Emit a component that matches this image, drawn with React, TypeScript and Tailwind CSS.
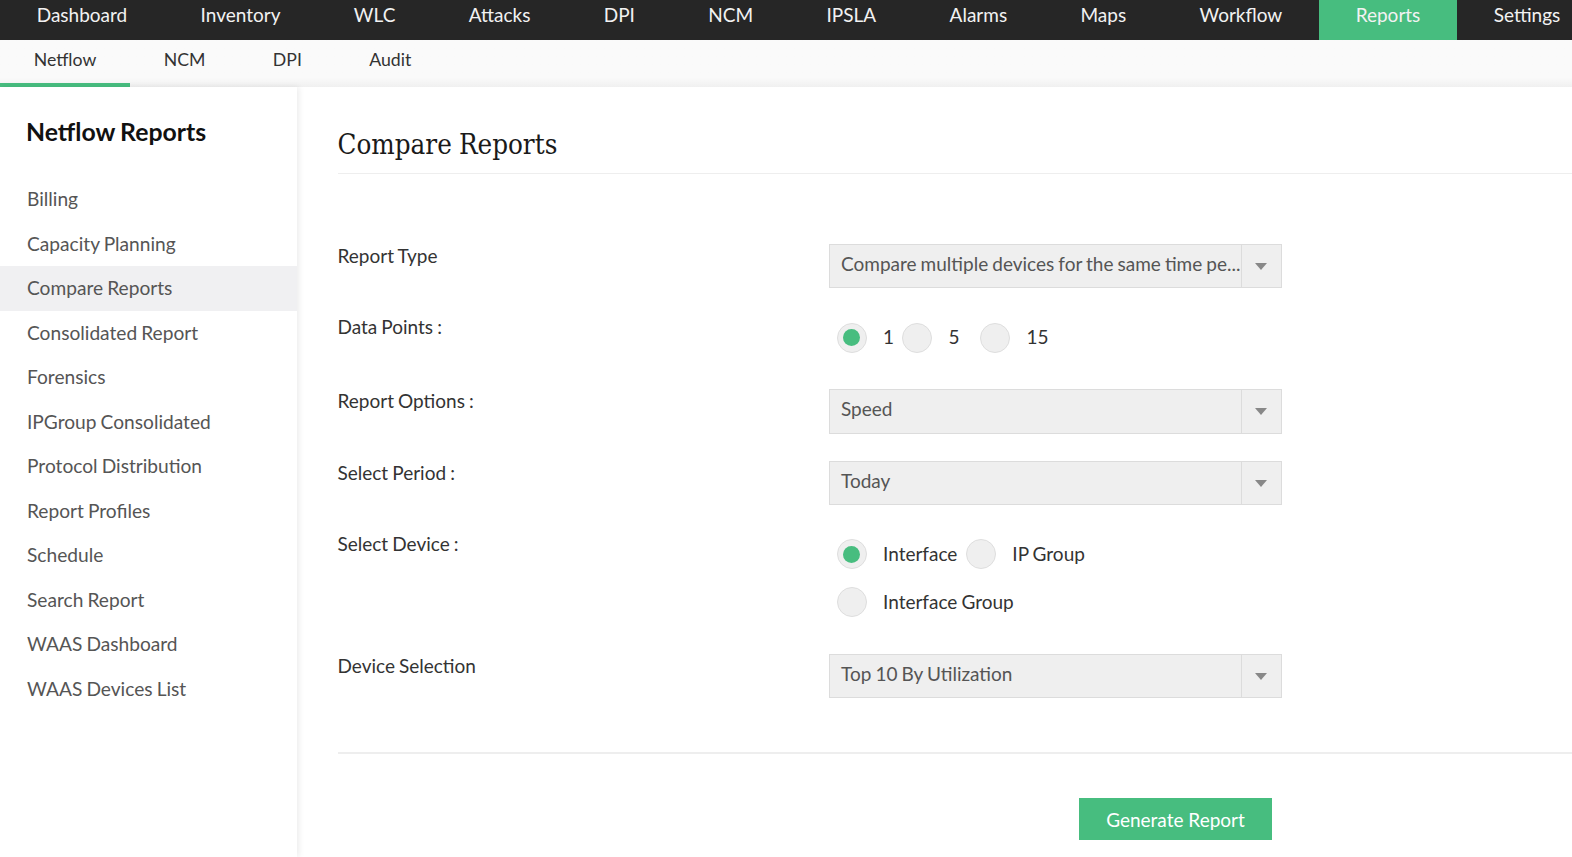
const topNav = ["Dashboard", "Inventory", "WLC", "Attacks", "DPI", "NCM", "IPSLA", "Alarms", "Maps", "Workflow", "Reports", "Settings"];
const subNav = ["Netflow", "NCM", "DPI", "Audit"];
const side = ["Billing", "Capacity Planning", "Compare Reports", "Consolidated Report", "Forensics", "IPGroup Consolidated", "Protocol Distribution", "Report Profiles", "Schedule", "Search Report", "WAAS Dashboard", "WAAS Devices List"];

function Select({ text, h = "h-[44px]" }: { text: string; h?: string }) {
  return (
    <div className={`flex ${h} w-[453px] items-stretch border border-[#dcdcdc] bg-[#efefef] text-[#555]`}>
      <div className="flex-1 whitespace-nowrap pl-[11.5px] pt-[6px] leading-[26px]">{text}</div>
      <div className="flex w-[40px] items-center justify-center border-l border-[#dcdcdc]">
        <svg width="12" height="7" viewBox="0 0 12 7"><path d="M0 0h12L6 7z" fill="#888" /></svg>
      </div>
    </div>
  );
}

function Radio({ label, on, cls = "" }: { label: string; on?: boolean; cls?: string }) {
  return (
    <div className={`flex items-center ${cls}`}>
      <span className="flex h-[30px] w-[30px] items-center justify-center rounded-full border border-[#dedede] bg-[#efefef]">
        {on && <span className="h-[17px] w-[17px] rounded-full bg-[#47bd7f]" />}
      </span>
      <span className="ml-[16.5px] text-[#333]">{label}</span>
    </div>
  );
}

function Row({ label, h, children }: { label: string; h: string; children: React.ReactNode }) {
  return (
    <div className={`flex ${h}`}>
      <div className="w-[491px] leading-[24px] text-[#333]">{label}</div>
      <div>{children}</div>
    </div>
  );
}

export default function App() {
  return (
    <div className="flex h-[857px] w-full flex-col overflow-hidden bg-white text-[19px] font-['Lato',sans-serif] [word-spacing:-0.8px]">
      <nav className="flex h-[40px] shrink-0 bg-[#262626] text-[#f2f2f2]">
        {topNav.map((t) => (
          <div key={t} className={`shrink-0 px-[36.7px] leading-[30px] ${t === "Reports" ? "bg-[#47bd7f]" : ""}`}>{t}</div>
        ))}
      </nav>
      <div className="flex h-[47px] shrink-0 bg-gradient-to-b from-[#fafafa] from-80% to-[#f0f0f0] text-[17.7px] text-[#333]">
        {subNav.map((t, i) => (
          <div key={t} className={`px-[33.7px] pt-[6px] leading-[28px] ${i === 0 ? "border-b-4 border-[#47bd7f]" : ""}`}>{t}</div>
        ))}
      </div>
      <div className="flex min-h-0 flex-1">
        <aside className="relative w-[297px] shrink-0 pt-[29px] shadow-[2px_0_6px_rgba(0,0,0,0.08)]">
          <h2 className="pl-[26px] text-[24.8px] font-bold leading-[32px] text-[#111]">Netflow Reports</h2>
          <ul className="mt-[29px] text-[19.15px] text-[#555]">
            {side.map((s) => (
              <li key={s} className={`h-[44.5px] pl-[27px] leading-[44.5px] ${s === "Compare Reports" ? "bg-[#f0f0f2]" : ""}`}>{s}</li>
            ))}
          </ul>
        </aside>
        <main className="min-w-0 flex-1 pl-[40.5px]">
          <h1 className="h-[87px] border-b border-[#eeeeee] pt-[39px] font-['DejaVu_Serif_Condensed','DejaVu_Serif',serif] text-[27.5px] leading-[36px] text-[#1a1a1a]">Compare Reports</h1>
          <div className="mt-[70px]">
            <Row label="Report Type" h="h-[71px]"><Select text="Compare multiple devices for the same time pe..." /></Row>
            <Row label="Data Points :" h="h-[74px]">
              <div className="flex pl-[8px] pt-[7.5px]"><Radio label="1" on /><Radio label="5" cls="ml-[8px]" /><Radio label="15" cls="ml-[20.5px]" /></div>
            </Row>
            <Row label="Report Options :" h="h-[72px]"><Select text="Speed" h="h-[45px]" /></Row>
            <Row label="Select Period :" h="h-[71px]"><Select text="Today" /></Row>
            <Row label="Select Device :" h="h-[122px]">
              <div className="pl-[8px] pt-[7px]">
                <div className="flex"><Radio label="Interface" on /><Radio label="IP Group" cls="ml-[8.5px]" /></div>
                <Radio label="Interface Group" cls="mt-[18px]" />
              </div>
            </Row>
            <Row label="Device Selection" h="h-[98px]"><Select text="Top 10 By Utilization" /></Row>
          </div>
          <div className="border-t-2 border-[#eeeeee] pl-[741.5px] pt-[44px]">
            <button className="h-[42px] w-[193px] bg-[#47bd7f] pt-[2px] text-white">Generate Report</button>
          </div>
        </main>
      </div>
    </div>
  );
}
